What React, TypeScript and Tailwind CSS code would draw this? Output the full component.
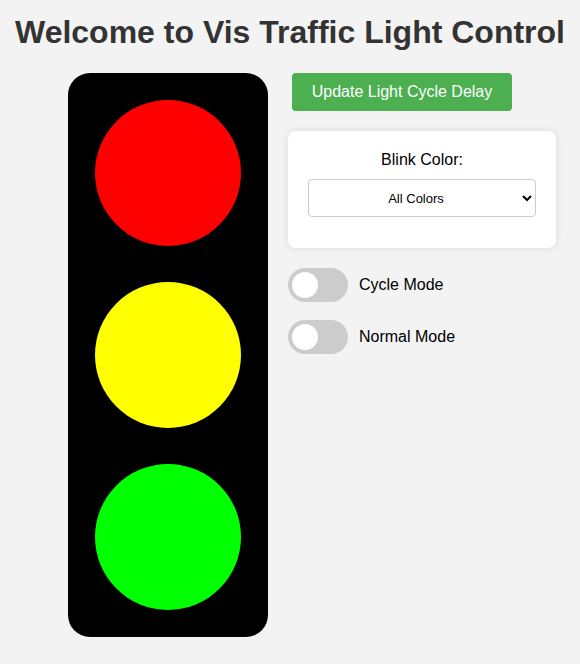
export default function App() {
  return (
    <div className="min-h-[664px] w-[580px] bg-[#f3f3f3] font-['Liberation_Sans',Arial,sans-serif] text-black">
      <h1 className="pt-[14px] text-center text-[32px] leading-[37px] font-bold text-[#333]">
        Welcome to Vis Traffic Light Control
      </h1>

      <div className="mt-[22px] flex gap-5 pl-[68px]">
        {/* traffic light */}
        <div className="flex w-[200px] flex-col items-center gap-[36px] rounded-[22px] bg-black py-[27px]">
          <div className="size-[146px] rounded-full bg-[#ff0000]" />
          <div className="size-[146px] rounded-full bg-[#ffff00]" />
          <div className="size-[146px] rounded-full bg-[#00ff00]" />
        </div>

        {/* controls */}
        <div className="flex w-[268px] flex-col">
          <button
            type="button"
            className="ml-1 h-[38px] w-[220px] rounded-[4px] bg-[#4caf50] text-[16px] text-white"
          >
            Update Light Cycle Delay
          </button>

          <div className="mt-5 rounded-[8px] bg-white px-5 pt-5 pb-[31px] shadow-[0_0_8px_rgba(0,0,0,0.1)]">
            <div className="text-center text-[16px] leading-[18px]">Blink Color:</div>
            <select
              defaultValue="all"
              className="mt-[10px] h-[38px] w-full rounded-[4px] border border-[#ccc] bg-white px-2 text-center text-[13px] [text-align-last:center]"
            >
              <option value="all">All Colors</option>
              <option value="red">Red</option>
              <option value="yellow">Yellow</option>
              <option value="green">Green</option>
            </select>
          </div>

          <div className="mt-5 flex flex-col gap-[18px]">
            {["Cycle Mode", "Normal Mode"].map((label) => (
              <label key={label} className="flex items-center gap-[11px]">
                <span className="flex h-[34px] w-[60px] items-center rounded-full bg-[#ccc] px-1">
                  <span className="size-[26px] rounded-full bg-white" />
                </span>
                <span className="text-[16px]">{label}</span>
              </label>
            ))}
          </div>
        </div>
      </div>
    </div>
  );
}
